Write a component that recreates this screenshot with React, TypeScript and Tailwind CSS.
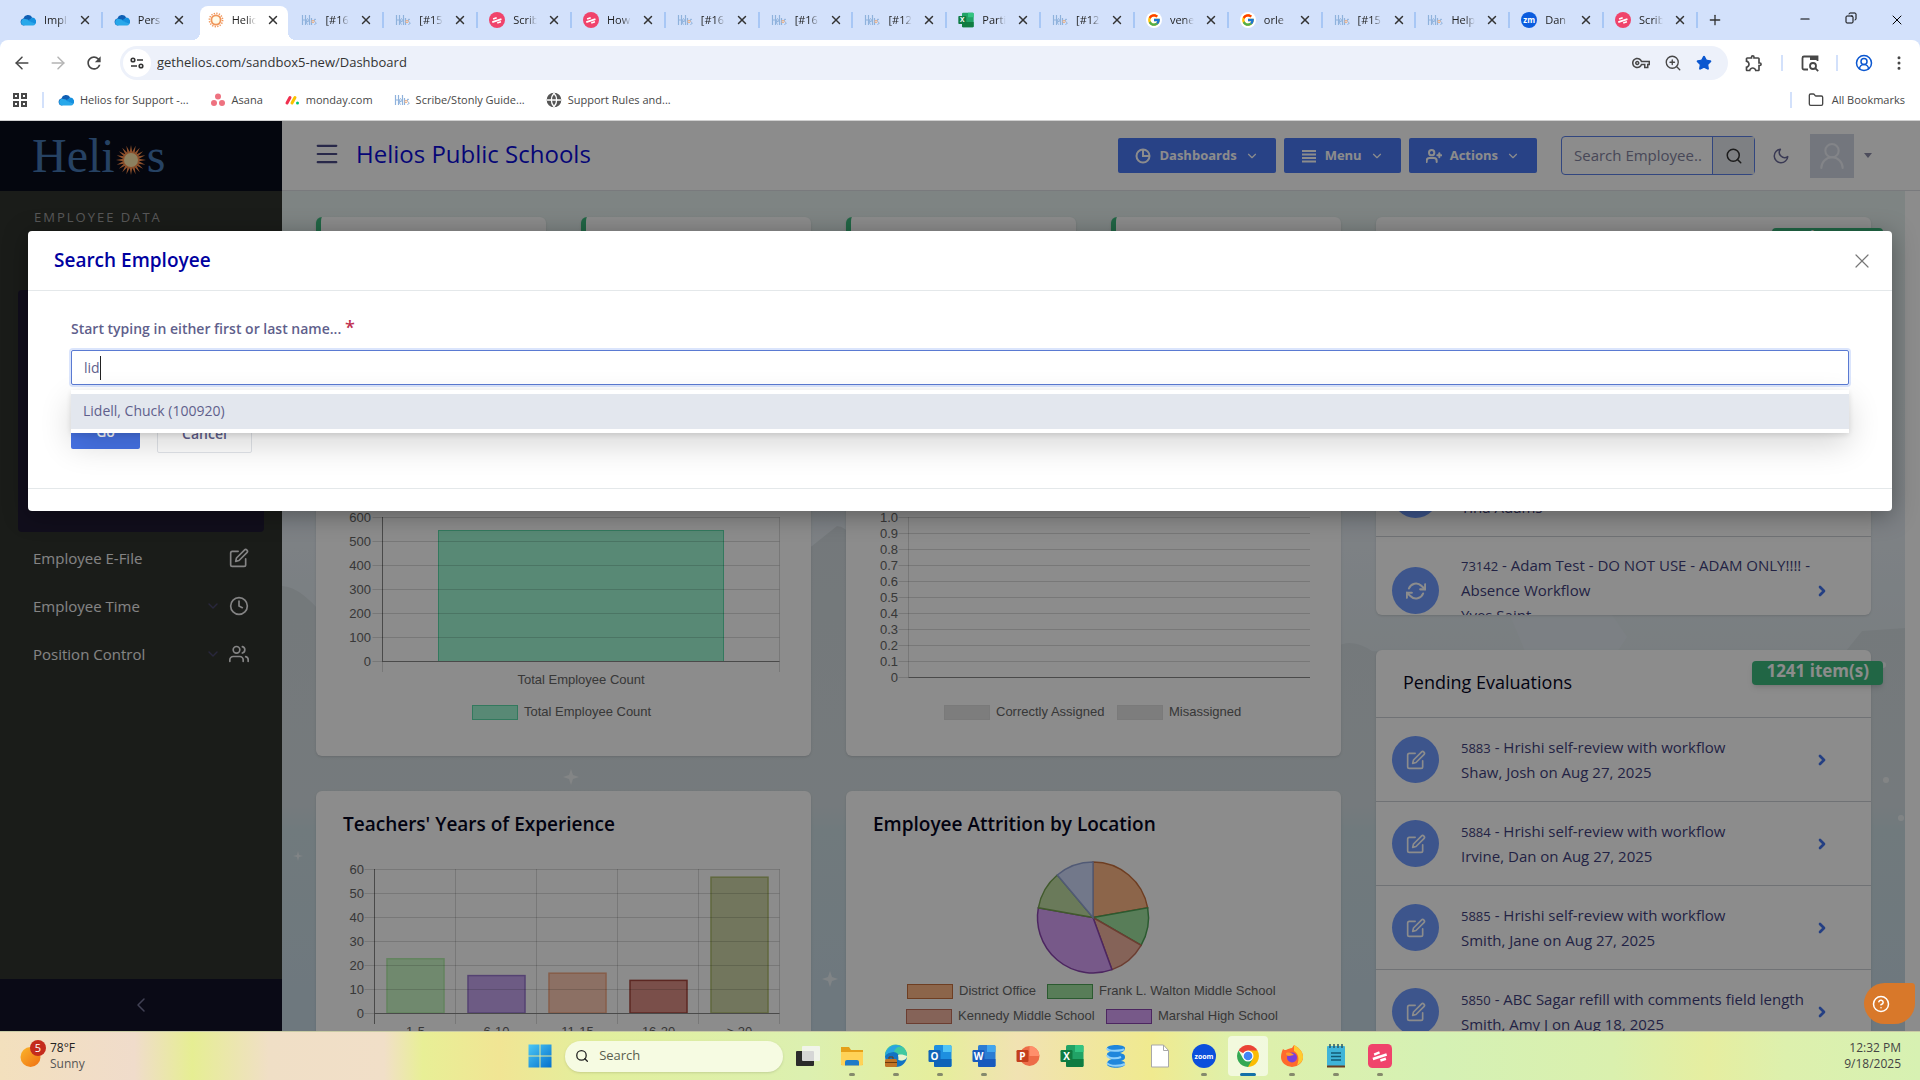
import { useState, type ReactNode } from 'react';
import { FiChevronRight, FiClock, FiEdit, FiMoon, FiRefreshCw, FiUserPlus, FiUsers, FiSearch } from 'react-icons/fi';
import { FcGoogle } from 'react-icons/fc';
import { MdOutlineExtension, MdOutlineVpnKey, MdRefresh } from 'react-icons/md';
import {
    ArrowLeft,
    ArrowRight,
    ChevronDown,
    ChevronLeft,
    CircleHelp,
    CircleUserRound,
    Copy,
    EllipsisVertical,
    Folder,
    Globe,
    Menu,
    Minus,
    Plus,
    Search,
    Star,
    UserRound,
    X,
    ZoomIn,
} from 'lucide-react';
import clsx from 'clsx';

/* ---------- small logos ---------- */

function CloudLogo() {
    return (
        <svg viewBox="0 0 16 16" className="size-4 shrink-0">
            <path d="M4 13.5a3.6 3.6 0 0 1-.6-7.1 4.8 4.8 0 0 1 8.7-1.1L9 10z" fill="#0f5fb4" />
            <path d="M3.8 13.5a3.4 3.4 0 0 1 .4-6.7l3.6.6 7.4 4.9a2.8 2.8 0 0 1-2.2 1.2z" fill="#28a8ea" />
            <path d="M8 8.6l4.2-3a4 4 0 0 1 3 6.6z" fill="#1490df" />
        </svg>
    );
}

function SunLogo() {
    return (
        <svg viewBox="0 0 16 16" className="size-4 shrink-0">
            <circle cx="8" cy="8" r="4.6" fill="#fffbe8" stroke="#f0965a" strokeWidth="1.8" />
            <circle cx="8" cy="8" r="6.6" fill="none" stroke="#f0965a" strokeWidth="1.6" strokeDasharray="1.3 1.3" />
        </svg>
    );
}

/* condensed wordmark, too small to read */
function HeliosMini() {
    return (
        <svg viewBox="0 0 16 16" className="size-4 shrink-0 fill-none stroke-[#8fb2dc]">
            <path d="M1.5 3v10M4.5 3v10M1.5 8h3M8.5 3v10M10.5 6v7" strokeWidth="1.2" />
            <path d="M6.8 12.5q-1.3 0-1.3-3t1-3 .8 3H5.7M15 7.5q-1.8-1-1.8.5t1.6 2.5-1.5 2" />
            <circle cx="12" cy="9.5" r="1.2" stroke="#f0b080" />
        </svg>
    );
}

function ScribeMark({ className, rx = 8 }: { className?: string; rx?: number }) {
    return (
        <svg viewBox="0 0 16 16" className={clsx('shrink-0', className ?? 'size-4')}>
            <rect width="16" height="16" rx={rx} fill="#f0436b" />
            <path d="M3.8 6.3l3.6-1.4.6 1.5-3.6 1.4zM3 9.2l9.2-3 .5 1.7-9.2 3zM8 10.2l3.7-1.2.5 1.6-3.7 1.2z" fill="#fff" />
        </svg>
    );
}

function OfficeLogo({ letter, dark, mid, light, round, className }: { letter: string; dark: string; mid: string; light: string; round?: boolean; className?: string }) {
    return (
        <svg viewBox="0 0 24 24" className={clsx('shrink-0', className ?? 'size-6')}>
            {round ? (
                <>
                    <circle cx="13.5" cy="12" r="10" fill={mid} />
                    <path d="M13.5 2a10 10 0 0 1 10 10h-10z" fill={light} />
                </>
            ) : (
                <>
                    <rect x="6" y="1" width="17.5" height="22" rx="1.6" fill={mid} />
                    <path d="M15 1h7a1.5 1.5 0 0 1 1.5 1.5V8H15z" fill={light} />
                    <path d="M6 15h17.5v6.5A1.5 1.5 0 0 1 22 23H7.5A1.5 1.5 0 0 1 6 21.5z" fill={dark} />
                </>
            )}
            <rect x="0.5" y="6" width="12" height="12" rx="1.2" fill={dark} />
            <text x="6.5" y="15.5" textAnchor="middle" fontSize="10" fontWeight="700" fill="#fff" fontFamily="Open Sans, sans-serif">
                {letter}
            </text>
        </svg>
    );
}

function ExcelLogo({ className }: { className?: string }) {
    return <OfficeLogo letter="X" dark="#107c41" mid="#21a366" light="#33c481" className={className} />;
}

function GoogleTab() {
    return (
        <span className="flex size-4 shrink-0 items-center justify-center rounded-full bg-white">
            <FcGoogle className="size-3.5" />
        </span>
    );
}

function ZoomTab() {
    return (
        <span className="flex size-4 shrink-0 items-center justify-center rounded-full bg-[#0b5cde] text-[8px] leading-none font-bold text-white">
            zm
        </span>
    );
}

/* ---------- browser ---------- */

const TABS: { title: string; icon: ReactNode; active?: boolean }[] = [
    { title: 'Impl', icon: <CloudLogo /> },
    { title: 'Pers', icon: <CloudLogo /> },
    { title: 'Helic', icon: <SunLogo />, active: true },
    { title: '[#16', icon: <HeliosMini /> },
    { title: '[#15', icon: <HeliosMini /> },
    { title: 'Scrib', icon: <ScribeMark /> },
    { title: 'How', icon: <ScribeMark /> },
    { title: '[#16', icon: <HeliosMini /> },
    { title: '[#16', icon: <HeliosMini /> },
    { title: '[#12', icon: <HeliosMini /> },
    { title: 'Parti', icon: <ExcelLogo className="size-4" /> },
    { title: '[#12', icon: <HeliosMini /> },
    { title: 'vene', icon: <GoogleTab /> },
    { title: 'orle', icon: <GoogleTab /> },
    { title: '[#15', icon: <HeliosMini /> },
    { title: 'Help', icon: <HeliosMini /> },
    { title: 'Dan', icon: <ZoomTab /> },
    { title: 'Scrib', icon: <ScribeMark /> },
];

function TabStrip() {
    return (
        <div className="flex h-10 bg-[#d3e1fb] pl-[9px]">
            <div className="flex min-w-0 flex-1">
                {TABS.map((tab, i) => (
                    <div key={i} className="flex min-w-0 flex-1 pt-1.5 pl-[3px]">
                        <div
                            className={clsx(
                                'relative flex min-w-0 flex-1 items-center rounded-t-lg pb-1.5 pl-2',
                                tab.active &&
                                    'bg-white before:absolute before:bottom-0 before:-left-2 before:size-2 before:bg-[radial-gradient(circle_at_0_0,transparent_8px,white_8px)] after:absolute after:-right-2 after:bottom-0 after:size-2 after:bg-[radial-gradient(circle_at_100%_0,transparent_8px,white_8px)]',
                            )}
                        >
                            {tab.icon}
                            <span className="ml-2 w-6 overflow-hidden text-[11px] whitespace-nowrap text-[#1f1f1f] [mask-image:linear-gradient(to_right,black_60%,transparent)]">
                                {tab.title}
                            </span>
                            <button aria-label="Close tab" className="ml-2.5">
                                <X className="size-3.5 text-[#333]" strokeWidth={2.5} />
                            </button>
                        </div>
                        <span className={clsx('mt-1.5 h-4 w-0.5', i !== 1 && !tab.active && 'bg-[#a8c7f5]')} />
                    </div>
                ))}
            </div>
            <div className="flex w-[222px] items-center justify-between pl-[9px]">
                <button aria-label="New tab">
                    <Plus className="size-4 text-[#333]" />
                </button>
                <div className="flex text-black">
                    <button aria-label="Minimize" className="flex w-[46px] justify-center">
                        <Minus className="size-3.5" strokeWidth={2} />
                    </button>
                    <button aria-label="Restore" className="flex w-[46px] justify-center">
                        <Copy className="size-3 -scale-x-100" strokeWidth={2} />
                    </button>
                    <button aria-label="Close window" className="flex w-[46px] justify-center">
                        <X className="size-4" strokeWidth={1.5} />
                    </button>
                </div>
            </div>
        </div>
    );
}

function AddressBar() {
    return (
        <div className="bg-[#d3e1fb]">
            <div className="flex h-[46px] items-center rounded-t-lg bg-white pr-3 pl-3 text-[#474747]">
                <div className="flex w-[108px] gap-4">
                    <button aria-label="Back">
                        <ArrowLeft className="size-5" strokeWidth={1.8} />
                    </button>
                    <button aria-label="Forward">
                        <ArrowRight className="size-5 text-[#b4b4b4]" strokeWidth={1.8} />
                    </button>
                    <button aria-label="Reload">
                        <MdRefresh className="size-5" />
                    </button>
                </div>
                <div className="flex h-[34px] min-w-0 flex-1 items-center rounded-full bg-[#edf1fa] pr-4 pl-[3px]">
                    <button aria-label="Site information" className="flex size-7 items-center justify-center rounded-full bg-white">
                        <svg viewBox="0 0 16 16" className="size-4 fill-none stroke-[#333] stroke-[1.6]">
                            <circle cx="4" cy="5" r="1.8" />
                            <path d="M8 5h6M2 11h6" />
                            <circle cx="12" cy="11" r="1.8" />
                        </svg>
                    </button>
                    <input
                        aria-label="Address"
                        defaultValue="gethelios.com/sandbox5-new/Dashboard"
                        className="ml-1.5 min-w-0 flex-1 bg-transparent text-[13px] text-[#333] outline-none"
                    />
                    <div className="flex items-center gap-3.5">
                        <MdOutlineVpnKey className="size-[18px]" />
                        <ZoomIn className="size-[18px]" strokeWidth={1.8} />
                        <Star className="size-4 fill-[#0b57d0] text-[#0b57d0]" />
                    </div>
                </div>
                <div className="flex w-[180px] items-center justify-between pl-4">
                    <MdOutlineExtension className="size-5" />
                    <span className="h-4 w-0.5 bg-[#d3e1fb]" />
                    <svg viewBox="0 0 20 20" className="size-5 fill-none stroke-[#474747] stroke-[1.8]">
                        <path d="M8 16.5H4A1.5 1.5 0 0 1 2.5 15V5A1.5 1.5 0 0 1 4 3.500h13.500V8" />
                        <path d="M10 5h8" strokeWidth="4" />
                        <circle cx="13" cy="13" r="3" />
                        <path d="M15.2 15.2l3 3" />
                    </svg>
                    <span className="h-4 w-0.5 bg-[#d3e1fb]" />
                    <CircleUserRound className="size-[18px] text-[#0b57d0]" />
                    <EllipsisVertical className="size-[18px]" />
                </div>
            </div>
        </div>
    );
}

function BookmarkBar() {
    return (
        <nav aria-label="Bookmarks" className="flex h-[35px] items-center border-b border-[#d0d0d0] bg-white pr-[15px] pb-1.5 pl-3 text-[11px] text-[#474747]">
            <svg viewBox="0 0 16 16" className="size-4 fill-none stroke-[#474747] stroke-2">
                <path d="M2 2h4v4H2zM10 2h4v4h-4zM2 10h4v4H2zM10 10h4v4h-4z" />
            </svg>
            <span className="ml-3.5 h-4 w-0.5 bg-[#d3e1fb]" />
            <div className="ml-3.5 flex gap-[21px]">
                <a href="#" className="flex items-center gap-1.5">
                    <CloudLogo />
                    Helios for Support -...
                </a>
                <a href="#" className="flex items-center gap-1.5">
                    <svg viewBox="0 0 16 16" className="size-4 fill-[#ee7280]">
                        <circle cx="8" cy="4.5" r="3" />
                        <circle cx="4" cy="11" r="3" />
                        <circle cx="12" cy="11" r="3" />
                    </svg>
                    Asana
                </a>
                <a href="#" className="flex items-center gap-1.5">
                    <svg viewBox="0 0 16 16" className="size-4" strokeLinecap="round" strokeWidth="3">
                        <path d="M3 11l3-5.5" stroke="#f0304f" />
                        <path d="M8 11l3-5.5" stroke="#fbc300" />
                        <path d="M13.5 11v0" stroke="#00c875" />
                    </svg>
                    monday.com
                </a>
                <a href="#" className="flex items-center gap-1.5">
                    <HeliosMini />
                    Scribe/Stonly Guide...
                </a>
                <a href="#" className="flex items-center gap-1.5">
                    <Globe className="size-4 fill-[#555] text-[#555] [&>path]:stroke-white" />
                    Support Rules and...
                </a>
            </div>
            <div className="ml-auto flex items-center">
                <span className="mr-4 h-4 w-0.5 bg-[#d3e1fb]" />
                <button className="flex items-center gap-2">
                    <Folder className="size-4" />
                    All Bookmarks
                </button>
            </div>
        </nav>
    );
}

/* ---------- sidebar ---------- */

const RAYS = Array.from({ length: 20 }, (_, i) => {
    const a = (i * Math.PI) / 10;
    const b = a + Math.PI / 20;
    return `${16 + 15 * Math.cos(a)},${16 + 15 * Math.sin(a)} ${16 + 8 * Math.cos(b)},${16 + 8 * Math.sin(b)}`;
}).join(' ');

const NAV = [
    { label: 'Employee E-File', Icon: FiEdit, more: false },
    { label: 'Employee Time', Icon: FiClock, more: true },
    { label: 'Position Control', Icon: FiUsers, more: true },
];

function Sidebar() {
    return (
        <aside className="flex w-[282px] shrink-0 flex-col bg-[#31332f]">
            <div className="flex h-[70px] shrink-0 items-center bg-[#090b1b] pl-8 font-['Liberation_Serif',serif] text-5xl text-[#4578b4]">
                Heli
                <svg viewBox="0 0 32 32" className="mt-2 size-8">
                    <polygon points={RAYS} fill="#ff9350" />
                    <circle cx="16" cy="16" r="7" fill="#ffe9ae" />
                </svg>
                s
            </div>
            <div className="flex min-h-0 flex-1 flex-col px-[18px] pt-4">
                <h2 className="px-4 text-[13px] leading-5 tracking-[2px] text-[#a0a0a0]">EMPLOYEE DATA</h2>
                <div className="mt-[63px] h-[242px] shrink-0 rounded bg-[#1f1b33]" />
                <nav className="mt-0.5">
                    {NAV.map(({ label, Icon, more }) => (
                        <a key={label} href="#" className="flex h-12 items-center px-[15px] text-[15px] font-medium text-[#f0f0f0]">
                            {label}
                            {more && <ChevronDown className="ml-auto size-4 text-[#4a4870]" />}
                            <Icon className={clsx('size-5', more ? 'ml-2' : 'ml-auto')} />
                        </a>
                    ))}
                </nav>
            </div>
            <button aria-label="Collapse sidebar" className="flex h-[52px] items-center justify-center bg-[#131328]">
                <ChevronLeft className="size-6 text-[#77779a]" strokeWidth={1.5} />
            </button>
        </aside>
    );
}

/* ---------- header ---------- */

function HeaderButton({ icon, children }: { icon: ReactNode; children: ReactNode }) {
    return (
        <button className="flex h-[35px] items-center gap-2 rounded-xs bg-[#4a78f5] px-[17px] text-[13px] font-bold text-white">
            {icon}
            {children}
            <ChevronDown className="size-3.5" strokeWidth={2} />
        </button>
    );
}

function PageHeader() {
    return (
        <header className="flex h-[70px] shrink-0 items-center border-b border-[#dcdfe3] bg-white pr-12 pl-[31px]">
            <button aria-label="Toggle menu" className="pb-1">
                <Menu className="size-7 text-[#4a4a86]" strokeWidth={1.8} />
            </button>
            <h1 className="ml-[15px] pb-1 text-2xl text-[#0c0cd8]">Helios Public Schools</h1>
            <div className="ml-auto flex items-center gap-2">
                <HeaderButton
                    icon={
                        <svg viewBox="0 0 16 16" className="size-4 fill-none stroke-white stroke-2">
                            <circle cx="8" cy="8" r="6.5" />
                            <path d="M8 2v6h6" />
                        </svg>
                    }
                >
                    Dashboards
                </HeaderButton>
                <HeaderButton
                    icon={
                        <svg viewBox="0 0 16 16" className="size-4 fill-none stroke-white stroke-2">
                            <path d="M1 3h14M1 6.5h14M1 10h14M1 13.5h14" />
                        </svg>
                    }
                >
                    Menu
                </HeaderButton>
                <HeaderButton icon={<FiUserPlus className="size-4" strokeWidth={3} />}>Actions</HeaderButton>
            </div>
            <div className="ml-6 flex h-[39px] rounded-sm border border-[#5c80e8] text-[#5f5f8c]">
                <input
                    aria-label="Search employee"
                    placeholder="Search Employee.."
                    className="w-[150px] pl-3 text-[15px] outline-none placeholder:text-[#83839f]"
                />
                <button aria-label="Search" className="flex w-[42px] items-center justify-center border-l border-[#5c80e8] bg-[#e6e9ef]">
                    <FiSearch className="size-[18px] text-[#333]" />
                </button>
            </div>
            <button aria-label="Dark mode" className="ml-[17px]">
                <FiMoon className="size-[18px] text-[#6b6b9a]" />
            </button>
            <div className="ml-5 flex size-11 items-center justify-center bg-[#d2d8e4]">
                <UserRound className="size-8 text-[#eef1f8]" strokeWidth={1.5} />
            </div>
            <span className="ml-2.5 border-x-4 border-t-[5px] border-x-transparent border-t-[#8c8ca8]" />
        </header>
    );
}

/* ---------- charts ---------- */

const AXIS = '#888';
const GRID = 'rgba(0,0,0,0.14)';

function Card({ title, children }: { title: string; children: ReactNode }) {
    return (
        <section className="h-[317px] overflow-hidden rounded-md bg-white shadow-sm">
            <h3 className="flex h-[66px] items-center px-[27px] text-[19px] font-semibold text-[#05051e]">{title}</h3>
            {children}
        </section>
    );
}

function Plot({ children }: { children: ReactNode }) {
    return (
        <svg viewBox="0 0 495 251" className="w-full" fontFamily="Liberation Sans, sans-serif" fontSize="13" fill="#666">
            {children}
        </svg>
    );
}

function Rows({ labels, x, right, step, labelX }: { labels: string[]; x: number; right: number; step: number; labelX: number }) {
    return (
        <>
            {labels.map((label, i) => {
                const y = 12.5 + i * step;
                const last = i === labels.length - 1;
                return (
                    <g key={label}>
                        <path d={`M${x - 10} ${y}H${right}`} stroke={GRID} />
                        {last && <path d={`M${x} ${y}H${right}`} stroke={AXIS} />}
                        <text x={labelX} y={y + 4.5} textAnchor="end">
                            {label}
                        </text>
                    </g>
                );
            })}
        </>
    );
}

function Legend({ x, y, fill, stroke, children }: { x: number; y: number; fill: string; stroke: string; children: string }) {
    return (
        <>
            <rect x={x + 0.5} y={y + 0.5} width="45" height="14" fill={fill} stroke={stroke} />
            <text x={x + 52} y={y + 11}>
                {children}
            </text>
        </>
    );
}

function EmployeeCountChart() {
    return (
        <Plot>
            <rect x="122.5" y="25.5" width="285" height="131" fill="#a0f9d5" stroke="#5ddcab" />
            <path d="M66.5 12V167M463.5 12V167" stroke={GRID} />
            <path d="M66.5 12V157" stroke={AXIS} />
            <Rows labels={['600', '500', '400', '300', '200', '100', '0']} x={66.5} right={463.5} step={24} labelX={55} />
            <text x="265" y="179" textAnchor="middle">
                Total Employee Count
            </text>
            <Legend x={156} y={200} fill="#a0f9d5" stroke="#5ddcab">
                Total Employee Count
            </Legend>
        </Plot>
    );
}

function AssignmentChart() {
    return (
        <Plot>
            <path d="M62.5 12V172" stroke={GRID} />
            <Rows
                labels={['1.0', '0.9', '0.8', '0.7', '0.6', '0.5', '0.4', '0.3', '0.2', '0.1', '0']}
                x={62.5}
                right={464}
                step={16}
                labelX={52}
            />
            <Legend x={98} y={200} fill="#e4e4e4" stroke="#dedede">
                Correctly Assigned
            </Legend>
            <Legend x={271} y={200} fill="#e4e4e4" stroke="#dedede">
                Misassigned
            </Legend>
        </Plot>
    );
}

const EXPERIENCE = [
    { label: '1-5', value: 23, fill: '#cdf9c8', stroke: '#b4f0ac' },
    { label: '6-10', value: 16, fill: '#c6a7f0', stroke: '#9a78cf' },
    { label: '11-15', value: 17, fill: '#ffcdb6', stroke: '#f5aa86' },
    { label: '16-20', value: 14, fill: '#de9187', stroke: '#a8483e' },
    { label: '> 20', value: 57, fill: '#cfd7a9', stroke: '#b0be72' },
];

function ExperienceChart() {
    return (
        <Plot>
            {EXPERIENCE.map((bar, i) => {
                const h = bar.value * 2.4;
                return (
                    <g key={bar.label}>
                        <rect x={71 + i * 81} y={157 - h} width="57" height={h - 1} fill={bar.fill} stroke={bar.stroke} strokeWidth="1.5" />
                        <path d={`M${139.5 + i * 81} 12V167`} stroke={GRID} />
                        <text x={99.5 + i * 81} y="179" textAnchor="middle">
                            {bar.label}
                        </text>
                    </g>
                );
            })}
            <path d="M58.5 12V167" stroke={AXIS} />
            <Rows labels={['60', '50', '40', '30', '20', '10', '0']} x={58.5} right={463.5} step={24} labelX={48} />
        </Plot>
    );
}

const SLICES = [
    { from: 0, to: 80, fill: '#ffb988', stroke: '#c9713e' },
    { from: 80, to: 120, fill: '#a0e3a0', stroke: '#4fa558' },
    { from: 120, to: 160, fill: '#f3b5a0', stroke: '#c4705a' },
    { from: 160, to: 280, fill: '#d9a2fa', stroke: '#8b45b0' },
    { from: 280, to: 320, fill: '#c1dea4', stroke: '#77a552' },
    { from: 320, to: 360, fill: '#cfdafb', stroke: '#94a4d6' },
];

function rim(deg: number) {
    const rad = (deg * Math.PI) / 180;
    return `${247 + 55.5 * Math.sin(rad)} ${60.5 - 55.5 * Math.cos(rad)}`;
}

function AttritionChart() {
    return (
        <Plot>
            {SLICES.map((s) => (
                <path key={s.from} d={`M247 60.5L${rim(s.from)}A55.5 55.5 0 0 1 ${rim(s.to)}Z`} fill={s.fill} stroke={s.stroke} strokeWidth="1.5" />
            ))}
            <Legend x={61} y={127} fill="#ffb988" stroke="#c9713e">
                District Office
            </Legend>
            <Legend x={201} y={127} fill="#a0e3a0" stroke="#4fa558">
                Frank L. Walton Middle School
            </Legend>
            <Legend x={60} y={152} fill="#f3b5a0" stroke="#c4705a">
                Kennedy Middle School
            </Legend>
            <Legend x={260} y={152} fill="#d9a2fa" stroke="#8b45b0">
                Marshal High School
            </Legend>
        </Plot>
    );
}

/* ---------- right column ---------- */

interface Pending {
    id: string;
    name: string;
    who: string;
}

const WORKFLOWS: Pending[] = [
    { id: '73139', name: 'Absence Workflow', who: 'Adams, Tina' },
    { id: '73140', name: 'Absence Workflow', who: 'Adams, Tina' },
    { id: '73141', name: 'Absence Workflow', who: 'Tina Adams' },
    { id: '73142', name: 'Adam Test - DO NOT USE - ADAM ONLY!!!! - Absence Workflow', who: 'Yves Saint' },
];

const EVALUATIONS: Pending[] = [
    { id: '5883', name: 'Hrishi self-review with workflow', who: 'Shaw, Josh on Aug 27, 2025' },
    { id: '5884', name: 'Hrishi self-review with workflow', who: 'Irvine, Dan on Aug 27, 2025' },
    { id: '5885', name: 'Hrishi self-review with workflow', who: 'Smith, Jane on Aug 27, 2025' },
    { id: '5850', name: 'ABC Sagar refill with comments field length', who: 'Smith, Amy J on Aug 18, 2025' },
];

function PendingCard({ title, count, items, icon }: { title: string; count: string; items: Pending[]; icon: ReactNode }) {
    return (
        <section className="relative h-[398px] shrink-0 rounded-md bg-white shadow-sm">
            <span className="absolute top-[11px] -right-3 flex h-6 items-center rounded-sm bg-[#3cba7e] px-3.5 pb-1 text-[17px] leading-5 font-bold text-white shadow-md">
                {count}
            </span>
            <div className="h-full overflow-hidden">
                <h3 className="flex h-[67px] items-center px-[27px] pb-1 text-lg text-[#05051e]">{title}</h3>
                <ul>
                    {items.map((item) => (
                        <li key={item.id} className="flex min-h-[84px] items-center border-t border-[#cdd0d6] py-4 pl-4">
                            <span className="flex size-[47px] shrink-0 items-center justify-center rounded-full bg-[#6f9bff] text-white">
                                {icon}
                            </span>
                            <a href="#" className="ml-[22px] w-[353px] shrink-0 text-[15px] leading-[25px] text-[#3f3f7d]">
                                <span className="text-[13px] leading-none">{item.id}</span> - {item.name}
                                <br />
                                {item.who}
                            </a>
                            <FiChevronRight className="size-4 shrink-0 text-[#4273ee]" strokeWidth={4} />
                        </li>
                    ))}
                </ul>
            </div>
        </section>
    );
}

/* ---------- dashboard ---------- */

function Backdrop() {
    return (
        <svg viewBox="0 0 1623 840" preserveAspectRatio="none" className="absolute inset-0 size-full">
            <defs>
                <linearGradient id="sky" x1="0" y1="0" x2="0" y2="1">
                    <stop offset="0" stopColor="#e6f1ef" />
                    <stop offset="0.4" stopColor="#e4ecf2" />
                    <stop offset="0.7" stopColor="#d7e0e4" />
                    <stop offset="1" stopColor="#cfe0e8" />
                </linearGradient>
                <linearGradient id="hill" x1="0" y1="0" x2="0" y2="1">
                    <stop offset="0" stopColor="#d3dbe0" />
                    <stop offset="0.55" stopColor="#d6dfe3" />
                    <stop offset="0.6" stopColor="#cddee3" />
                    <stop offset="1" stopColor="#c8dae6" />
                </linearGradient>
            </defs>
            <rect width="1623" height="840" fill="url(#sky)" />
            <path
                d="M0 395q20 0 50 40L300 470 530 355l25-20q15 0 40 50L1040 470q20-30 50-10l300 20 150 10 40-50 43-3v403H0z"
                fill="url(#hill)"
            />
            <path d="M1182 424l46 0 25 60 12 12h30l22-30 8 10 20-30-15-22z" fill="#e2eaf0" />
            <g fill="#fff" opacity="0.6">
                <path d="M289 578l2 6 6 2-6 2-2 6-2-6-6-2 6-2zM548 780l2 6 6 2-6 2-2 6-2-6-6-2 6-2zM16 660l1 4 4 1-4 1-1 4-1-4-4-1 4-1z" />
                <circle cx="1601" cy="474" r="3" />
                <circle cx="1604" cy="589" r="3" />
                <circle cx="1619" cy="627" r="3" />
            </g>
        </svg>
    );
}

function Dashboard() {
    return (
        <div className="min-h-0 flex-1 bg-white pr-[15px]">
            <div className="relative h-full overflow-hidden">
                <Backdrop />
                <div className="relative grid grid-cols-12 gap-x-[35px] px-[34px] pt-[26px]">
                    <div className="col-span-8 grid grid-cols-4 content-start gap-[35px]">
                        {[0, 1, 2, 3].map((n) => (
                            <div key={n} className="h-[187px] rounded-md border-l-[5px] border-[#3cba7e] bg-white shadow-sm" />
                        ))}
                        <div className="col-span-2">
                            <Card title="Total Employee Count">
                                <EmployeeCountChart />
                            </Card>
                        </div>
                        <div className="col-span-2">
                            <Card title="Teacher Assignments">
                                <AssignmentChart />
                            </Card>
                        </div>
                        <div className="col-span-2">
                            <Card title="Teachers' Years of Experience">
                                <ExperienceChart />
                            </Card>
                        </div>
                        <div className="col-span-2">
                            <Card title="Employee Attrition by Location">
                                <AttritionChart />
                            </Card>
                        </div>
                    </div>
                    <div className="col-span-4 flex flex-col gap-[35px]">
                        <PendingCard title="Pending Workflows" count="25 item(s)" items={WORKFLOWS} icon={<FiRefreshCw className="size-5" strokeWidth={2.5} />} />
                        <PendingCard title="Pending Evaluations" count="1241 item(s)" items={EVALUATIONS} icon={<FiEdit className="size-5" />} />
                    </div>
                </div>
            </div>
        </div>
    );
}

/* ---------- search dialog ---------- */

function SearchDialog() {
    const [query, setQuery] = useState('lid');

    return (
        <div className="absolute inset-0 bg-black/45 px-7 pt-[110px]">
            <div role="dialog" aria-labelledby="search-title" className="rounded-sm bg-white shadow-[0_4px_24px_rgba(0,0,0,0.35)]">
                <div className="flex h-[60px] items-center justify-between border-b border-[#e4e8ea] pr-[18px] pl-[26px]">
                    <h2 id="search-title" className="text-[19px] font-semibold text-[#0000a0]">
                        Search Employee
                    </h2>
                    <button aria-label="Close">
                        <X className="size-6 text-[#777]" strokeWidth={1.2} />
                    </button>
                </div>
                <div className="px-[43px] pt-[26px] pb-[35px]">
                    <label htmlFor="employee" className="block text-sm leading-6 font-semibold text-[#5f5f8c]">
                        Start typing in either first or last name... <span className="text-lg leading-none text-[#c0304f]">*</span>
                    </label>
                    <div className="relative mt-[9px]">
                        <input
                            id="employee"
                            autoFocus
                            value={query}
                            onChange={(e) => setQuery(e.target.value)}
                            className="h-[35px] w-full rounded-xs border border-[#5a7ad2] px-3 text-sm text-[#5f5f8c] caret-transparent shadow-[0_0_0_2px_#dbe5fc] outline-none"
                        />
                        {/* steady caret after the typed text */}
                        <span aria-hidden className="pointer-events-none absolute top-1.5 left-0 flex h-6 pl-[13px] text-sm">
                            <span className="invisible">{query}</span>
                            <span className="w-px bg-[#222]" />
                        </span>
                        <ul className="absolute inset-x-0 top-10 z-10 bg-white py-1 shadow-[0_12px_32px_rgba(0,0,0,0.16),0_2px_6px_rgba(0,0,0,0.12)]">
                            <li>
                                <button className="block h-[35px] w-full bg-[#e3e7ee] px-3 pb-0.5 text-left text-sm text-[#5f5f8c]">
                                    Lidell, Chuck (100920)
                                </button>
                            </li>
                        </ul>
                    </div>
                    <div className="mt-[29px] flex items-start gap-[17px] text-sm font-semibold">
                        <button className="h-[35px] w-[69px] rounded-xs bg-[#4673e6] text-white">Go</button>
                        <button className="h-[39px] w-[95px] rounded-xs border border-[#e2e5ea] text-[#5f5f8c]">Cancel</button>
                    </div>
                </div>
                <div className="h-[23px] border-t border-[#e4e8ea]" />
            </div>
        </div>
    );
}

/* ---------- taskbar ---------- */

const APPS: { name: string; icon: ReactNode; state?: 'open' | 'active' }[] = [
    {
        name: 'File Explorer',
        state: 'open',
        icon: (
            <svg viewBox="0 0 24 24" className="size-6">
                <path d="M1 3h8l2 3h12v15H1z" fill="#e5a019" />
                <path d="M1 8h22v12a1.5 1.5 0 0 1-1.5 1.5h-19A1.5 1.5 0 0 1 1 20z" fill="#ffd257" />
                <path d="M5 21.5V18a2 2 0 0 1 2-2h10a2 2 0 0 1 2 2v3.500z" fill="#1e7bc8" />
            </svg>
        ),
    },
    {
        name: 'Edge',
        state: 'open',
        icon: (
            <svg viewBox="0 0 24 24" className="size-6">
                <circle cx="12" cy="12" r="11" fill="#1273c4" />
                <path d="M1 12A11 11 0 0 1 23 11c0 4-3 5.5-6 5.5-2.5 0-3-1-2.5-2C16 11 13 8 9.5 8 6 8 2.5 9.5 1 12z" fill="#3fc9a0" />
                <path d="M1 12C2 5 7 1 12 1c3 0 5 1 6 2-4-1-7 1-8 5-4 0-7 1-9 4z" fill="#2aa5e0" />
                <path d="M14 11c3-1 6 0 9 1 0 3-3 4.5-6 4.5-2.5 0-3-1-2.5-2z" fill="#e9f3cf" />
                <rect x="1" y="15" width="12" height="8" rx="1.5" fill="#c07326" />
                <path d="M5 15v-2h4v2M1 18.5h12" stroke="#6d3a0c" fill="none" />
            </svg>
        ),
    },
    { name: 'Outlook', state: 'open', icon: <OfficeLogo letter="O" dark="#0f64b8" mid="#1d8fe0" light="#50c4f5" /> },
    { name: 'Word', state: 'open', icon: <OfficeLogo letter="W" dark="#185abd" mid="#2b7cd3" light="#41a5ee" /> },
    { name: 'PowerPoint', icon: <OfficeLogo letter="P" dark="#c43e1c" mid="#ed6c47" light="#ff8f6b" round /> },
    { name: 'Excel', icon: <ExcelLogo /> },
    {
        name: 'Database',
        icon: (
            <svg viewBox="0 0 24 24" className="size-6">
                <path d="M3 4c0-4 18-4 18 0 0 3-2 4-5 5 3 1 5 1 5 4s-2 3-4 4c3 0 4 1 4 3 0 5-18 5-18 0 0-3 2-4 5-5-3-1-5-1-5-4s2-3 4-3C4 7 3 6 3 4z" fill="#1f86dc" />
                <path d="M3 4c0 4 15 3 17 1M3 11c1 4 10 4 14 2M3 19c3 4 14 3 18 1" stroke="#8fd0fa" strokeWidth="2" fill="none" />
            </svg>
        ),
    },
    {
        name: 'Document',
        icon: (
            <svg viewBox="0 0 24 24" className="size-6">
                <path d="M3.5 1h12l5 5.5V23h-17z" fill="#fff" stroke="#a8a8a8" />
                <path d="M15.5 1v5.5h5" fill="none" stroke="#a8a8a8" />
            </svg>
        ),
    },
    {
        name: 'Zoom',
        state: 'open',
        icon: (
            <span className="flex size-6 items-center justify-center rounded-full bg-[#0b4fdc] text-[7px] leading-none font-bold text-white">
                zoom
            </span>
        ),
    },
    {
        name: 'Chrome',
        state: 'active',
        icon: (
            <svg viewBox="0 0 24 24" className="size-6">
                <path d="M12 12L2.5 6.5A11 11 0 0 1 21.5 6.5z" fill="#ea4335" />
                <path d="M12 12V6.5h9.5A11 11 0 0 1 12 23z" fill="#fbbc04" />
                <path d="M12 23A11 11 0 0 1 2.5 6.5L7.2 14.7 12 12l4.8 2.7z" fill="#34a853" />
                <circle cx="12" cy="12" r="5.5" fill="#fff" />
                <circle cx="12" cy="12" r="4.3" fill="#4285f4" />
            </svg>
        ),
    },
    {
        name: 'Firefox',
        state: 'open',
        icon: (
            <svg viewBox="0 0 24 24" className="size-6">
                <path d="M3 5c1 1 2 1 3 1 2-1 4-2 6-2l2-3c3 2 9 5 9 12a11 10 0 0 1-22 0c0-3 1-6 2-8z" fill="#ff6a2b" />
                <path d="M14 1c3 2 9 5 9 12 0 4-3 7-6 8 3-6 1-12-3-14z" fill="#ffcb2f" />
                <circle cx="12" cy="13.5" r="5" fill="#7a3fd8" />
                <path d="M6 9c3-1 6 0 8 2-2 0-3 1-5 1s-3-1-3-3z" fill="#ff9a2b" />
            </svg>
        ),
    },
    {
        name: 'Notepad',
        state: 'open',
        icon: (
            <svg viewBox="0 0 24 24" className="size-6">
                <rect x="3" y="2" width="18" height="20" rx="1" fill="#3fb4d8" />
                <path d="M3 21.5h18v2H3z" fill="#6b3d20" />
                <path d="M6 0v4M10 0v4M14 0v4M18 0v4" stroke="#2a5566" strokeWidth="1.5" />
                <path d="M7 9h10M7 12.5h10M7 16h10" stroke="#135a74" strokeWidth="1.5" />
            </svg>
        ),
    },
    { name: 'Scribe', state: 'open', icon: <ScribeMark className="size-6" rx={3} /> },
];

function Taskbar() {
    return (
        <footer className="grid h-[49px] shrink-0 grid-cols-[1fr_auto_1fr] items-center border-t border-[#c9cba5] bg-[linear-gradient(90deg,#f3e0bd_0%,#f0dccb_7%,#e6ee93_10%,#f0dfc6_14%,#f1dfc8_20%,#e8ef96_22%,#f1e594_26%,#e2ef9d_31%,#dcf0b0_42%,#e6ee9c_49%,#f1e2b2_53%,#f0ea8f_60%,#dff0aa_64%,#d5f1b4_75%,#daf0ae_84%,#e6eea0_89%,#ddf0ad_93%,#d7f1b2_100%)]">
            <button className="flex items-center gap-1 pl-5 text-left text-xs leading-4 text-[#222]">
                <svg viewBox="0 0 26 32" className="h-8 w-[26px]">
                    <defs>
                        <linearGradient id="sun" x1="0" y1="0" x2="1" y2="1">
                            <stop offset="0" stopColor="#fbb62c" />
                            <stop offset="1" stopColor="#ef6f12" />
                        </linearGradient>
                    </defs>
                    <circle cx="10.5" cy="17" r="10" fill="url(#sun)" />
                    <circle cx="18" cy="8" r="8" fill="#c42b1c" />
                    <text x="18" y="12" textAnchor="middle" fontSize="11" fill="#fff" fontFamily="Open Sans, sans-serif">
                        5
                    </text>
                </svg>
                <span>
                    78°F
                    <br />
                    <span className="text-[#555]">Sunny</span>
                </span>
            </button>
            <div className="flex items-center">
                <button aria-label="Start" className="flex w-11 justify-center">
                    <svg viewBox="0 0 24 24" className="size-6">
                        <defs>
                            <linearGradient id="win" x1="0" y1="0" x2="1" y2="1">
                                <stop offset="0" stopColor="#4cc8f5" />
                                <stop offset="1" stopColor="#0470cd" />
                            </linearGradient>
                        </defs>
                        <path d="M.5.5h11v11H.5zM12.5.5h11v11h-11zM.5 12.5h11v11H.5zM12.5 12.5h11v11h-11z" fill="url(#win)" />
                    </svg>
                </button>
                <label className="mx-[3px] flex h-[31px] w-[218px] items-center gap-2.5 rounded-full bg-[#f6fbe2] pl-2.5 shadow-sm">
                    <Search className="size-4 text-[#222]" strokeWidth={2.2} />
                    <input aria-label="Search" placeholder="Search" className="w-full bg-transparent text-[13px] outline-none placeholder:text-[#5a5f50]" />
                </label>
                <button aria-label="Task view" className="flex w-11 justify-center">
                    <svg viewBox="0 0 24 24" className="size-6">
                        <rect x="0" y="7" width="18" height="15" rx="1" fill="#2b2b2b" />
                        <rect x="6" y="2" width="18" height="15" rx="1" fill="#f4f4f4" fillOpacity="0.85" />
                    </svg>
                </button>
                {APPS.map((app) => (
                    <button
                        key={app.name}
                        aria-label={app.name}
                        className={clsx('relative mx-0.5 flex h-10 w-10 items-center justify-center rounded', app.state === 'active' && 'bg-white/60')}
                    >
                        {app.icon}
                        {app.state && (
                            <span
                                className={clsx(
                                    'absolute bottom-0 h-[3px] rounded-full',
                                    app.state === 'active' ? 'w-4 bg-[#1471a8]' : 'w-1.5 bg-[#858a6c]',
                                )}
                            />
                        )}
                    </button>
                ))}
            </div>
            <time className="pr-[19px] text-right text-xs leading-4 text-[#444]">
                12:32 PM
                <br />
                9/18/2025
            </time>
        </footer>
    );
}

export default function App() {
    return (
        <div className="flex h-screen flex-col overflow-hidden font-['Open_Sans','Noto_Sans',sans-serif]">
            <div className="shrink-0">
                <TabStrip />
                <AddressBar />
                <BookmarkBar />
            </div>
            <div className="relative flex min-h-0 flex-1">
                <Sidebar />
                <main className="flex min-w-0 flex-1 flex-col">
                    <PageHeader />
                    <Dashboard />
                </main>
                <SearchDialog />
                <button
                    aria-label="Help"
                    className="absolute right-[5px] bottom-[7px] flex h-[41px] w-[51px] items-center rounded-3xl rounded-tr-sm bg-[#d8782a] pl-2"
                >
                    <CircleHelp className="size-[18px] text-white" />
                </button>
            </div>
            <Taskbar />
        </div>
    );
}
